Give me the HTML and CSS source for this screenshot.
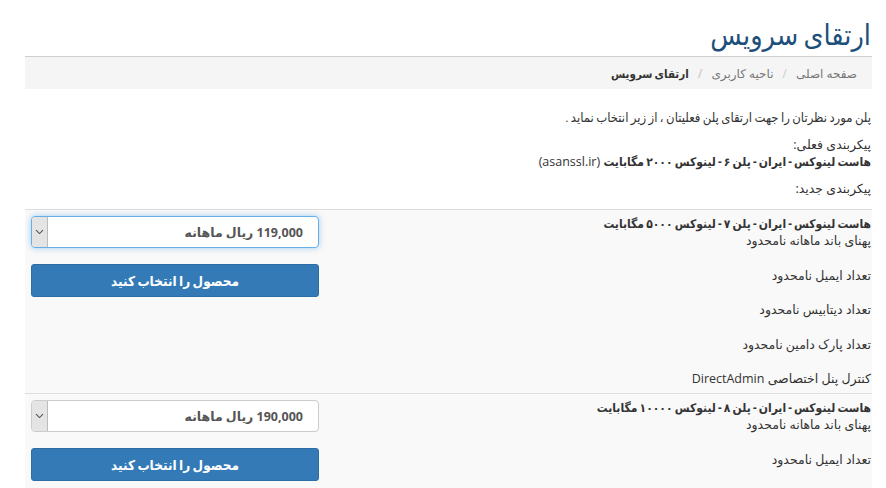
FILE: index.html
```html
<!DOCTYPE html>
<html lang="fa" dir="rtl">
<head>
  <meta charset="UTF-8" />
  <title>ارتقای سرویس</title>
  <link rel="stylesheet" href="styles.css">
</head>
<body>

<div class="page">
  <h1 class="page-title">ارتقای سرویس</h1>

  <ol class="breadcrumb">
    <li><a href="#">صفحه اصلی</a></li>
    <li><a href="#">ناحیه کاربری</a></li>
    <li class="active">ارتقای سرویس</li>
  </ol>

  <p class="intro">پلن مورد نظرتان را جهت ارتقای پلن فعلیتان ، از زیر انتخاب نماید .</p>

  <p class="current">پیکربندی فعلی:<br><strong>هاست لینوکس - ایران - پلن ۶ - لینوکس ۲۰۰۰ مگابایت</strong> (asanssl.ir)</p>

  <p class="new-label">پیکربندی جدید:</p>

  <!-- plans -->
  <div class="product">
    <div class="product-info">
      <strong>هاست لینوکس - ایران - پلن ۷ - لینوکس ۵۰۰۰ مگابایت</strong><br>
      پهنای باند ماهانه نامحدود
      <div class="feature">تعداد ایمیل نامحدود</div>
      <div class="feature">تعداد دیتابیس نامحدود</div>
      <div class="feature">تعداد پارک دامین نامحدود</div>
      <div class="feature">کنترل پنل اختصاصی DirectAdmin</div>
    </div>
    <div class="product-action">
      <div class="price-select focused">
        <span class="price-value">119,000 ریال ماهانه</span>
        <span class="price-arrow">
          <svg width="9" height="6" viewBox="0 0 9 6"><path d="M1 1.2 L4.5 4.6 L8 1.2" fill="none" stroke="#555" stroke-width="1.1"/></svg>
        </span>
      </div>
      <button class="btn-order">محصول را انتخاب کنید</button>
    </div>
  </div>

  <div class="product">
    <div class="product-info">
      <strong>هاست لینوکس - ایران - پلن ۸ - لینوکس ۱۰۰۰۰ مگابایت</strong><br>
      پهنای باند ماهانه نامحدود
      <div class="feature">تعداد ایمیل نامحدود</div>
      <div class="feature">تعداد دیتابیس نامحدود</div>
      <div class="feature">تعداد پارک دامین نامحدود</div>
      <div class="feature">کنترل پنل اختصاصی DirectAdmin</div>
    </div>
    <div class="product-action">
      <div class="price-select">
        <span class="price-value">190,000 ریال ماهانه</span>
        <span class="price-arrow">
          <svg width="9" height="6" viewBox="0 0 9 6"><path d="M1 1.2 L4.5 4.6 L8 1.2" fill="none" stroke="#555" stroke-width="1.1"/></svg>
        </span>
      </div>
      <button class="btn-order">محصول را انتخاب کنید</button>
    </div>
  </div>
</div>

</body>
</html>
```

FILE: styles.css
```css
* {
  box-sizing: border-box;
}
body {
  margin: 0;
  background: #fff;
  color: #333;
  font-family: "Open Sans", "DejaVu Sans", sans-serif;
  font-size: 12.5px;
  line-height: 17px;
}
strong {
  font-stretch: condensed;
  font-size: 12px;
}
.page {
  margin: 0 14px 0 25px;
}
.page-title {
  margin: 0;
  padding: 15px 1px 3px;
  font-size: 28.5px;
  line-height: 38px;
  font-weight: normal;
  font-stretch: condensed;
  color: #1d4f7b;
  border-bottom: 1px solid #cfcfcf;
}
.breadcrumb {
  list-style: none;
  margin: 0;
  padding: 0 15px;
  height: 32px;
  display: flex;
  align-items: center;
  background: #f5f5f5;
  font-size: 12px;
}
.breadcrumb li + li::before {
  content: "/";
  color: #ccc;
  padding: 0 9px;
}
.breadcrumb a {
  color: #777;
  text-decoration: none;
}
.breadcrumb .active {
  color: #333;
  font-size: 11.5px;
  font-weight: bold;
  font-stretch: condensed;
}
.intro {
  margin: 20px 1px 10px;
  font-size: 13px;
  font-stretch: condensed;
}
.current {
  margin: 0 1px 10px;
}
.new-label {
  margin: 0 1px 12px;
}
.product {
  display: flex;
  border-top: 1px solid #ddd;
  background: #f9f9f9;
}
.product-info {
  flex: 1;
  padding: 5px 1px 6px;
}
.feature {
  margin-top: 17.5px;
}
.product-action {
  width: 300px;
  padding: 6px 6px;
}
.price-select {
  display: flex;
  height: 32px;
  background: #fff;
  border: 1px solid #ccc;
  border-radius: 4px;
  overflow: hidden;
}
.price-select.focused {
  border-color: #66afe9;
  box-shadow: 0 0 6px rgba(102, 175, 233, 0.6);
}
.price-value {
  flex: 1;
  display: flex;
  align-items: center;
  padding: 0 15px;
  font-weight: bold;
  color: #555;
}
.price-arrow {
  width: 16px;
  display: flex;
  align-items: center;
  justify-content: center;
  background: #e4e4e4;
  border-right: 1px solid #bbb;
}
.btn-order {
  display: block;
  width: 100%;
  height: 33px;
  margin-top: 16px;
  border: 1px solid #2e6da4;
  border-radius: 3px;
  background: #337ab7;
  color: #fff;
  font-family: inherit;
  font-size: 13.5px;
  font-weight: bold;
  font-stretch: condensed;
}
```
